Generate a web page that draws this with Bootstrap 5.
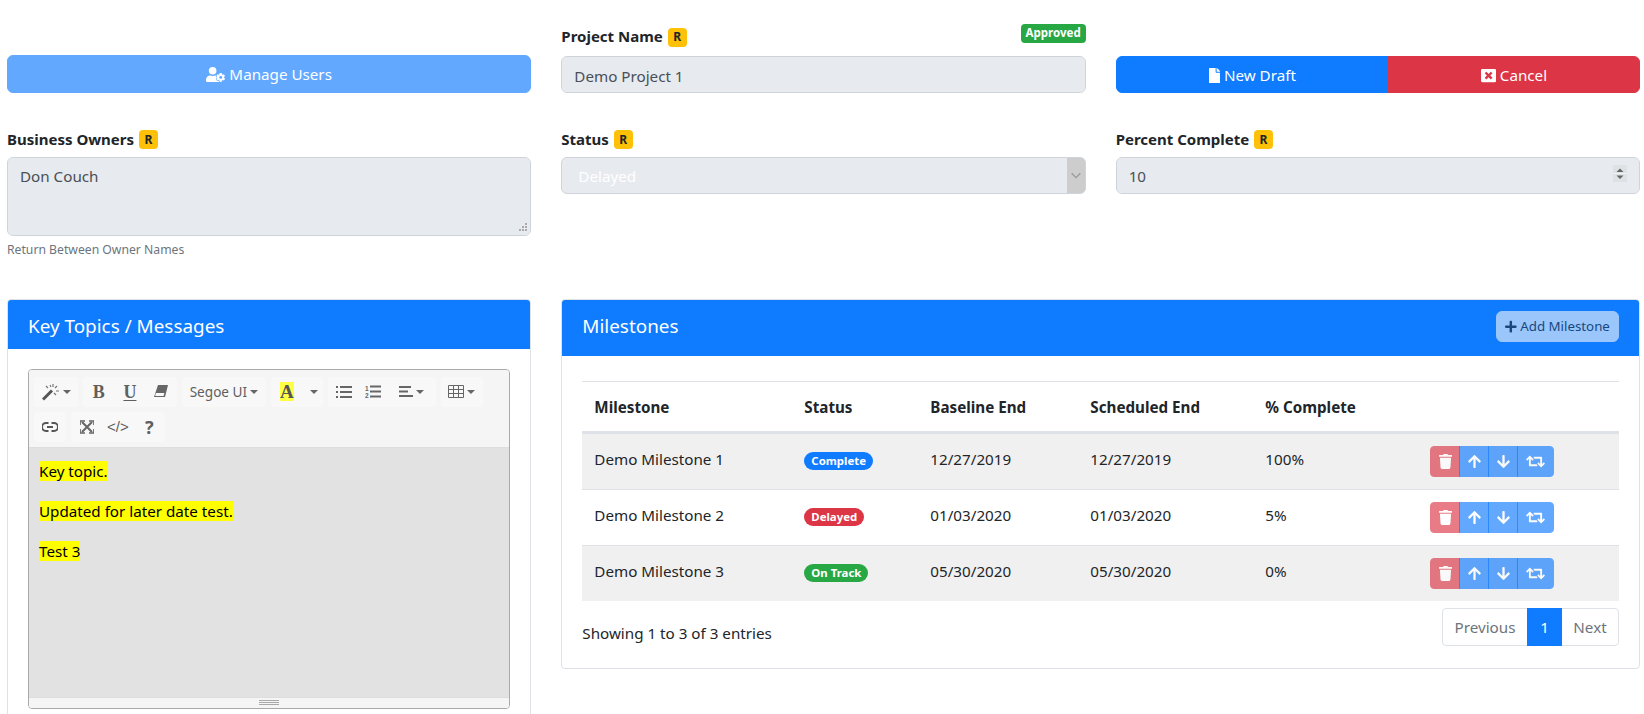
<!DOCTYPE html>
<html lang="en">
<head>
<meta charset="utf-8">
<title>Project</title>
<link href="https://cdn.jsdelivr.net/npm/bootstrap@5.3.0/dist/css/bootstrap.min.css" rel="stylesheet">
<style>
html,body{height:714px;overflow:hidden;background:#fff}
body{font-family:"Noto Sans","Open Sans",sans-serif;font-size:15.2px;color:#212529}
.btn{font-size:15.2px;padding-top:7px;padding-bottom:5px}
.btn-primary{--bs-btn-bg:#0f7bff;--bs-btn-border-color:#0f7bff;--bs-btn-disabled-bg:#0f7bff;--bs-btn-disabled-border-color:#0f7bff;--bs-btn-hover-bg:#0f7bff;--bs-btn-hover-border-color:#0f7bff}
.page-wrap{padding:24px 4px 0 7px}
.gut{--bs-gutter-x:30px;--bs-gutter-y:0}
.fld-label{font-weight:700;font-size:15px;line-height:24px;margin-bottom:8px;color:#212529}
.row-two .fld-label{margin-bottom:6px}
.req{display:inline-block;background:#ffc107;color:#212529;font-size:12px;font-weight:700;line-height:14px;padding:2.5px 5.5px;border-radius:4px;vertical-align:1px;margin-left:1px}
.appr{background:#28a745;color:#fff;font-size:11.5px;font-weight:700;line-height:12px;padding:3px 5px 4px;border-radius:4px;height:19px}
.row-one{margin-bottom:34px}
.btn-manage{width:100%;height:38px}
.form-control,.form-select{font-size:15.2px;padding-top:7.5px;padding-bottom:4.5px}
.form-control:disabled,.form-select:disabled{background-color:#e7eaee;color:#495057;border-color:#ced4da;opacity:1}
.owner-box{height:79px;resize:vertical;display:block}
.owner-box::-webkit-resizer{background:url("data:image/svg+xml,%3csvg xmlns='http://www.w3.org/2000/svg' width='15' height='15' fill='%23aaa'%3e%3crect x='10' y='3' width='2' height='2'/%3e%3crect x='7' y='6' width='2' height='2'/%3e%3crect x='10' y='6' width='2' height='2'/%3e%3crect x='4' y='9' width='2' height='2'/%3e%3crect x='7' y='9' width='2' height='2'/%3e%3crect x='10' y='9' width='2' height='2'/%3e%3c/svg%3e") no-repeat}
.help-line{font-size:12.2px;line-height:18px;margin-top:5px;color:#6c757d;height:18px}
.sel-status:disabled{color:#fff;padding-left:16px;background-image:url("data:image/svg+xml,%3csvg xmlns='http://www.w3.org/2000/svg' viewBox='0 0 16 16'%3e%3cpath fill='none' stroke='%23999' stroke-width='1.5' d='M3 6l5 5 5-5'/%3e%3c/svg%3e"),linear-gradient(#cdcdcd,#cdcdcd);background-position:right 2px center,right 0 top 0;background-size:14px 14px,18px 100%;background-repeat:no-repeat}
.num-box::-webkit-inner-spin-button{-webkit-appearance:none;appearance:none;opacity:1;width:14px;height:17px;margin-right:0;background:url("data:image/svg+xml,%3csvg xmlns='http://www.w3.org/2000/svg' width='14' height='17'%3e%3crect width='14' height='17' fill='%23dfe2e5'/%3e%3crect y='8' width='14' height='1' fill='%23f2f3f4'/%3e%3cpath d='M7 3.5l3.5 3.5h-7z' fill='%23666'/%3e%3cpath d='M7 14l3.5-3.5h-7z' fill='%23666'/%3e%3c/svg%3e") no-repeat}
.row-two{height:172px}
.blue-card{--bs-card-border-color:#dee2e6;--bs-card-border-radius:4px;--bs-card-inner-border-radius:3px}
.left-card{height:500px}
.head-left,.head-right{background:#0f7bff;color:#fff;font-size:18.9px;line-height:30px;border:0;display:flex;align-items:center;justify-content:space-between;padding:0 20px}
.head-left{height:49px;padding-top:4px}
.head-right{height:56px;padding-bottom:2px}
.head-title{margin-bottom:2px}
.btn-add{background:#f8f9fa;border-color:#f8f9fa;color:#212529;opacity:.6;height:31px;width:123px;font-size:13.3px;padding:0;white-space:nowrap}
.body-left{padding:20px}
.body-right{padding:25px 20px 22px}
.editor{border:1px solid #a9a9a9;border-radius:4px;height:340px;display:flex;flex-direction:column;overflow:hidden}
.tbar{background:#f5f5f5;border-bottom:1px solid #ddd;padding:0 0 5px 5px;display:flex;flex-wrap:wrap;height:78px;align-content:flex-start}
.tgroup{display:flex;margin:7px 5px 0 0;height:30px;background:#f8f8f8;border-radius:4px}
.tbar .tgroup:nth-child(n+7){margin-top:5px}
.tbtn{border:0;background:transparent;color:#5f5f5f;height:30px;width:31.3px;padding:0;display:flex;align-items:center;justify-content:center;font-size:13.6px;line-height:1}
.tbtn.w44{width:44px}
.tbtn.wfont{width:84px}
.tbtn.wcol{width:32px}
.tbtn.wdrop{width:20px}
.tbtn.w32{width:32px}
.tbtn.w27{width:27px}
.tbtn.w48{width:48.7px}
.tbtn.w42{width:42.7px}
.tserif{font-family:"Liberation Serif",serif;font-weight:700;font-size:18px}
.tund{text-decoration:underline;text-underline-offset:2px}
.tyel{background:#ffff44;color:#555;width:14px;height:19px;display:block;font-size:19px;line-height:19px;text-align:center}
.tcode{font-size:15px;font-family:"Liberation Sans",sans-serif}
.tq{font-size:18px;font-weight:700}
.care{display:inline-block;width:0;height:0;border-left:4px solid transparent;border-right:4px solid transparent;border-top:4px solid #666;margin-left:3px}
.edit-area{background:#e2e2e2;flex:1 1 auto;padding:11px 10px 0;color:#000;font-size:15.2px}
.edit-area p{margin:0 0 16px;line-height:24px}
.hilite{background:#ffff00}
.gripbar{background:#f5f5f5;border-top:1px solid #ddd;height:11px;display:flex;flex-direction:column;align-items:center;justify-content:center;gap:1px}
.gripbar i{display:block;width:20px;height:1px;background:#a9a9a9}
.ms-table{table-layout:fixed;width:100%;margin-bottom:7px;--bs-table-striped-bg:#f0f0f0;--bs-table-border-color:#dee2e6;border-top:1px solid #dee2e6}
.ms-table th,.ms-table td{padding:12px;vertical-align:middle;font-size:15.2px;white-space:nowrap}
.ms-table thead th{border-bottom:3px solid #dee2e6;font-weight:700;line-height:24px;padding-top:13px}
.ms-table td{height:56px}
.ms-table td.txt{padding-top:10px;padding-bottom:14px}
.ms-table tbody tr:last-child td{border-bottom:0}
.c1{width:210px}.c2{width:126px}.c3{width:160px}.c4{width:175px}.c5{width:165px}
.pill{font-size:11.4px;font-weight:700;line-height:12px;padding:3px 7px;border-radius:50rem;color:#fff;display:inline-block;height:18px;vertical-align:2px}
.pill-b{background:#0f7bff}.pill-r{background:#dc3545}.pill-g{background:#28a745}
.act .btn{height:31px;padding:0;display:flex;align-items:center;justify-content:center;--bs-btn-border-radius:4px}
.act .w30{width:30px}.act .w37{width:37px}
.act svg{height:15px;fill:#fff}
.i-trash{width:13px}.i-arrow{width:13px}.i-ret{width:19px}
.foot-txt{font-size:15.2px;margin-top:12px}
.dt-page{--bs-pagination-padding-x:0;--bs-pagination-color:#6c757d;--bs-pagination-active-bg:#0f7bff;--bs-pagination-active-border-color:#0f7bff;--bs-pagination-disabled-color:#6c757d;--bs-pagination-disabled-bg:#fff;--bs-pagination-font-size:15.2px;--bs-pagination-border-radius:4px;margin:0}
.dt-page .page-link{height:38px;text-align:center;line-height:24px}
.pw-prev{width:86px}.pw-one{width:35px}.pw-next{width:58px}
.ico{height:1em;fill:currentColor;vertical-align:-2px}
.defs-holder{display:none}
</style>
</head>
<body>
<svg class="defs-holder" aria-hidden="true">
  <symbol id="s-trash" viewBox="0 0 448 512"><path d="M432 32H312l-9.4-18.7A24 24 0 0 0 281.1 0H166.8a23.72 23.72 0 0 0-21.4 13.3L136 32H16A16 16 0 0 0 0 48v32a16 16 0 0 0 16 16h416a16 16 0 0 0 16-16V48a16 16 0 0 0-16-16zM53.2 467a48 48 0 0 0 47.9 45h245.8a48 48 0 0 0 47.9-45L416 128H32z"/></symbol>
  <symbol id="s-up" viewBox="0 0 448 512"><path d="M34.9 289.5l-22.2-22.2c-9.4-9.4-9.4-24.6 0-33.9L207 39c9.4-9.4 24.6-9.4 33.9 0l194.3 194.3c9.4 9.4 9.4 24.6 0 33.9L413 289.4c-9.5 9.5-25 9.3-34.3-.4L264 168.6V456c0 13.3-10.7 24-24 24h-32c-13.3 0-24-10.7-24-24V168.6L69.2 289.1c-9.3 9.8-24.8 10-34.3.4z"/></symbol>
  <symbol id="s-down" viewBox="0 0 448 512"><path d="M413.1 222.5l22.2 22.2c9.4 9.4 9.4 24.6 0 33.9L241 473c-9.4 9.4-24.6 9.4-33.9 0L12.7 278.6c-9.4-9.4-9.4-24.6 0-33.9l22.2-22.2c9.5-9.5 25-9.3 34.3.4L184 343.4V56c0-13.3 10.7-24 24-24h32c13.3 0 24 10.7 24 24v287.4l114.8-120.5c9.3-9.8 24.8-10 34.3-.4z"/></symbol>
  <symbol id="s-ret" viewBox="0 0 640 512"><path d="M629.657 343.598L528.971 444.284c-9.373 9.372-24.568 9.372-33.941 0L394.343 343.598c-9.373-9.373-9.373-24.569 0-33.941l10.823-10.823c9.562-9.562 25.133-9.34 34.419.492L480 342.118V160H292.451a24.005 24.005 0 0 1-16.971-7.029l-16-16C244.361 121.851 255.069 96 276.451 96H520c13.255 0 24 10.745 24 24v222.118l40.416-42.792c9.285-9.831 24.856-10.054 34.419-.492l10.823 10.823c9.372 9.372 9.372 24.569-.001 33.941zm-265.138 15.431A23.999 23.999 0 0 0 347.548 352H160V169.881l40.416 42.792c9.286 9.831 24.856 10.054 34.419.491l10.822-10.822c9.373-9.373 9.373-24.569 0-33.941L144.971 67.716c-9.373-9.373-24.569-9.373-33.941 0L10.343 168.402c-9.373 9.373-9.373 24.569 0 33.941l10.822 10.822c9.562 9.562 25.133 9.34 34.419-.491L96 169.881V392c0 13.255 10.745 24 24 24h243.549c21.382 0 32.09-25.851 16.971-40.971l-16.001-16z"/></symbol>
</svg>
<div class="page-wrap">
  <div class="row gut row-one">
    <div class="col-4 d-flex align-items-end">
      <button class="btn btn-primary btn-manage" type="button" disabled>
        <svg class="ico" viewBox="0 0 640 512"><circle cx="224" cy="128" r="128" fill="#fff"/><path fill="#fff" d="M144 288h16c44 24 84 24 128 0h16c80 0 144 64 144 144v32c0 26-22 48-48 48H48c-26 0-48-22-48-48v-32c0-80 64-144 144-144z"/><path fill="#fff" stroke="#0f7bff" stroke-width="36" paint-order="stroke" d="M610.5 373.3c2.6-14.1 2.6-28.5 0-42.6l25.8-14.9c3-1.7 4.3-5.2 3.3-8.5-6.7-21.6-18.2-41.2-33.2-57.4-2.3-2.5-6-3.1-9-1.4l-25.8 14.9c-10.9-9.3-23.4-16.5-36.9-21.3v-29.8c0-3.4-2.4-6.4-5.7-7.1-22.3-5-45-4.8-66.2 0-3.3.7-5.7 3.7-5.7 7.1v29.8c-13.5 4.8-26 12-36.9 21.3l-25.8-14.9c-2.9-1.7-6.7-1.1-9 1.4-15 16.2-26.5 35.8-33.2 57.4-1 3.3.4 6.8 3.3 8.5l25.8 14.9c-2.6 14.1-2.6 28.5 0 42.6l-25.8 14.9c-3 1.7-4.3 5.2-3.3 8.5 6.7 21.6 18.2 41.1 33.2 57.4 2.3 2.5 6 3.1 9 1.4l25.8-14.9c10.9 9.3 23.4 16.5 36.9 21.3v29.8c0 3.4 2.4 6.4 5.7 7.1 22.3 5 45 4.8 66.2 0 3.3-.7 5.7-3.7 5.7-7.1v-29.8c13.5-4.8 26-12 36.9-21.3l25.8 14.9c2.9 1.7 6.7 1.1 9-1.4 15-16.2 26.5-35.8 33.2-57.4 1-3.3-.4-6.8-3.3-8.5l-25.8-14.9z"/><circle cx="496" cy="352" r="48" fill="#0f7bff"/></svg>
        Manage Users
      </button>
    </div>
    <div class="col-4">
      <div class="d-flex justify-content-between align-items-start">
        <div class="fld-label">Project Name <span class="req">R</span></div>
        <span class="appr">Approved</span>
      </div>
      <input class="form-control" type="text" value="Demo Project 1" disabled>
    </div>
    <div class="col-4 d-flex align-items-end">
      <div class="btn-group w-100">
        <button class="btn btn-primary" type="button"><svg class="ico" viewBox="0 0 384 512"><path d="M224 136V0H24C10.7 0 0 10.7 0 24v464c0 13.3 10.7 24 24 24h336c13.3 0 24-10.7 24-24V160H248c-13.2 0-24-10.8-24-24zm160-14.1v6.1H256V0h6.1c6.4 0 12.5 2.5 17 7l97.9 98c4.5 4.5 7 10.6 7 16.9z"/></svg> New Draft</button>
        <button class="btn btn-danger" type="button"><svg class="ico" viewBox="0 0 512 512"><path d="M464 32H48C21.5 32 0 53.5 0 80v352c0 26.5 21.5 48 48 48h416c26.5 0 48-21.5 48-48V80c0-26.5-21.5-48-48-48zm-83.6 290.5c4.8 4.8 4.8 12.6 0 17.4l-40.5 40.5c-4.8 4.8-12.6 4.8-17.4 0L256 313.3l-66.5 67.1c-4.8 4.8-12.6 4.8-17.4 0l-40.5-40.5c-4.8-4.8-4.8-12.6 0-17.4l67.1-66.5-67.1-66.5c-4.8-4.8-4.8-12.6 0-17.4l40.5-40.5c4.8-4.8 12.6-4.8 17.4 0l66.5 67.1 66.5-67.1c4.8-4.8 12.6-4.8 17.4 0l40.5 40.5c4.8 4.8 4.8 12.6 0 17.4L313.3 256l67.1 66.5z"/></svg> Cancel</button>
      </div>
    </div>
  </div>

  <div class="row gut row-two">
    <div class="col-4">
      <div class="fld-label">Business Owners <span class="req">R</span></div>
      <textarea class="form-control owner-box" disabled>Don Couch</textarea>
      <div class="help-line">Return Between Owner Names</div>
    </div>
    <div class="col-4">
      <div class="fld-label">Status <span class="req">R</span></div>
      <select class="form-select sel-status" disabled><option>Delayed</option></select>
    </div>
    <div class="col-4">
      <div class="fld-label">Percent Complete <span class="req">R</span></div>
      <input class="form-control num-box" type="number" value="10" disabled>
    </div>
  </div>

  <div class="row gut align-items-start">
    <div class="col-4">
      <div class="card blue-card left-card">
        <div class="card-header head-left">Key Topics / Messages</div>
        <div class="card-body body-left">
          <div class="editor">
            <div class="tbar">
              <div class="tgroup"><button class="tbtn w44" type="button">
                <svg width="18" height="18" viewBox="0 0 18 18"><path d="M1 16.5l9-9" stroke="#555" stroke-width="3" fill="none"/><path d="M11 1v3M15 3l-2 2M17 8h-3M4 3l2 2M8 2l1 2M14 12l-2-2" stroke="#777" stroke-width="1.2" fill="none"/></svg><span class="care"></span></button></div>
              <div class="tgroup">
                <button class="tbtn tserif" type="button">B</button>
                <button class="tbtn tserif tund" type="button">U</button>
                <button class="tbtn" type="button"><svg width="14" height="13" viewBox="0 0 14 13"><path d="M4 0h10l-3 12H0z" fill="#666"/><path d="M1.8 8h8.6l-.8 3H1.2z" fill="#f8f8f8"/></svg></button>
              </div>
              <div class="tgroup"><button class="tbtn wfont" type="button">Segoe UI<span class="care"></span></button></div>
              <div class="tgroup">
                <button class="tbtn wcol" type="button"><span class="tyel tserif">A</span></button>
                <button class="tbtn wdrop" type="button"><span class="care"></span></button>
              </div>
              <div class="tgroup">
                <button class="tbtn w32" type="button"><svg width="16" height="12" viewBox="0 0 16 12" fill="#666"><rect y="0" width="2" height="2"/><rect y="5" width="2" height="2"/><rect y="10" width="2" height="2"/><rect x="4" y="0" width="12" height="2"/><rect x="4" y="5" width="12" height="2"/><rect x="4" y="10" width="12" height="2"/></svg></button>
                <button class="tbtn w27" type="button"><svg width="16" height="13" viewBox="0 0 16 13" fill="#666"><text x="0" y="5.5" font-size="6.5" font-weight="700" font-family="Liberation Sans">1</text><text x="0" y="13" font-size="6.5" font-weight="700" font-family="Liberation Sans">2</text><rect x="5" y="0.5" width="11" height="2"/><rect x="5" y="5.5" width="11" height="2"/><rect x="5" y="10.5" width="11" height="2"/></svg></button>
                <button class="tbtn w48" type="button"><svg width="14" height="11" viewBox="0 0 14 11" fill="#666"><rect width="12" height="2" y="0"/><rect width="9" height="2" y="4.5"/><rect width="14" height="2" y="9"/></svg><span class="care"></span></button>
              </div>
              <div class="tgroup"><button class="tbtn w42" type="button"><svg width="16" height="13" viewBox="0 0 16 13" fill="none" stroke="#666"><path d="M.5.5h15v12H.5zM.5 4.5h15M.5 8.5h15M5.5.5v12M10.5.5v12"/></svg><span class="care"></span></button></div>
              <div class="tgroup"><button class="tbtn w32" type="button"><svg width="16" height="10" viewBox="0 0 16 10" fill="none" stroke="#555" stroke-width="2"><path d="M6.5 1H4a4 4 0 0 0 0 8h2.5M9.5 1H12a4 4 0 0 1 0 8H9.5M5 5h6"/></svg></button></div>
              <div class="tgroup">
                <button class="tbtn" type="button"><svg width="14" height="14" viewBox="0 0 14 14" fill="none" stroke="#666" stroke-width="2"><path d="M2 2l10 10M12 2L2 12"/><path d="M0 5V1h5M9 1h5v4M14 9v4H9M5 13H0V9" stroke-width="1.7"/></svg></button>
                <button class="tbtn tcode" type="button">&lt;/&gt;</button>
                <button class="tbtn tq" type="button">?</button>
              </div>
            </div>
            <div class="edit-area">
              <p><span class="hilite">Key topic.</span></p>
              <p><span class="hilite">Updated for later date test.</span></p>
              <p><span class="hilite">Test 3</span></p>
            </div>
            <div class="gripbar"><i></i><i></i><i></i></div>
          </div>
        </div>
      </div>
    </div>
    <div class="col-4 flex-grow-1">
      <div class="card blue-card">
        <div class="card-header head-right"><span class="head-title">Milestones</span>
          <button class="btn btn-add" type="button"><svg class="ico" viewBox="0 0 448 512"><path d="M416 208H272V64c0-17.67-14.33-32-32-32h-32c-17.67 0-32 14.33-32 32v144H32c-17.67 0-32 14.33-32 32v32c0 17.67 14.33 32 32 32h144v144c0 17.67 14.33 32 32 32h32c17.67 0 32-14.33 32-32V304h144c17.67 0 32-14.33 32-32v-32c0-17.67-14.33-32-32-32z"/></svg> Add Milestone</button>
        </div>
        <div class="card-body body-right">
          <table class="table table-striped ms-table">
            <thead><tr><th class="c1">Milestone</th><th class="c2">Status</th><th class="c3">Baseline End</th><th class="c4">Scheduled End</th><th class="c5">% Complete</th><th></th></tr></thead>
            <tbody>
              <tr><td class="txt">Demo Milestone 1</td><td><span class="pill pill-b">Complete</span></td><td class="txt">12/27/2019</td><td class="txt">12/27/2019</td><td class="txt">100%</td><td>
                <div class="btn-group act"><button class="btn btn-danger w30" disabled><svg class="i-trash"><use href="#s-trash"/></svg></button><button class="btn btn-primary w30" disabled><svg class="i-arrow"><use href="#s-up"/></svg></button><button class="btn btn-primary w30" disabled><svg class="i-arrow"><use href="#s-down"/></svg></button><button class="btn btn-primary w37" disabled><svg class="i-ret"><use href="#s-ret"/></svg></button></div></td></tr>
              <tr><td class="txt">Demo Milestone 2</td><td><span class="pill pill-r">Delayed</span></td><td class="txt">01/03/2020</td><td class="txt">01/03/2020</td><td class="txt">5%</td><td>
                <div class="btn-group act"><button class="btn btn-danger w30" disabled><svg class="i-trash"><use href="#s-trash"/></svg></button><button class="btn btn-primary w30" disabled><svg class="i-arrow"><use href="#s-up"/></svg></button><button class="btn btn-primary w30" disabled><svg class="i-arrow"><use href="#s-down"/></svg></button><button class="btn btn-primary w37" disabled><svg class="i-ret"><use href="#s-ret"/></svg></button></div></td></tr>
              <tr><td class="txt">Demo Milestone 3</td><td><span class="pill pill-g">On Track</span></td><td class="txt">05/30/2020</td><td class="txt">05/30/2020</td><td class="txt">0%</td><td>
                <div class="btn-group act"><button class="btn btn-danger w30" disabled><svg class="i-trash"><use href="#s-trash"/></svg></button><button class="btn btn-primary w30" disabled><svg class="i-arrow"><use href="#s-up"/></svg></button><button class="btn btn-primary w30" disabled><svg class="i-arrow"><use href="#s-down"/></svg></button><button class="btn btn-primary w37" disabled><svg class="i-ret"><use href="#s-ret"/></svg></button></div></td></tr>
            </tbody>
          </table>
          <div class="d-flex justify-content-between align-items-center">
            <div class="foot-txt">Showing 1 to 3 of 3 entries</div>
            <ul class="pagination dt-page">
              <li class="page-item disabled"><a class="page-link pw-prev" href="#">Previous</a></li>
              <li class="page-item active"><a class="page-link pw-one" href="#">1</a></li>
              <li class="page-item"><a class="page-link pw-next" href="#">Next</a></li>
            </ul>
          </div>
        </div>
      </div>
    </div>
  </div>
</div>
</body>
</html>
